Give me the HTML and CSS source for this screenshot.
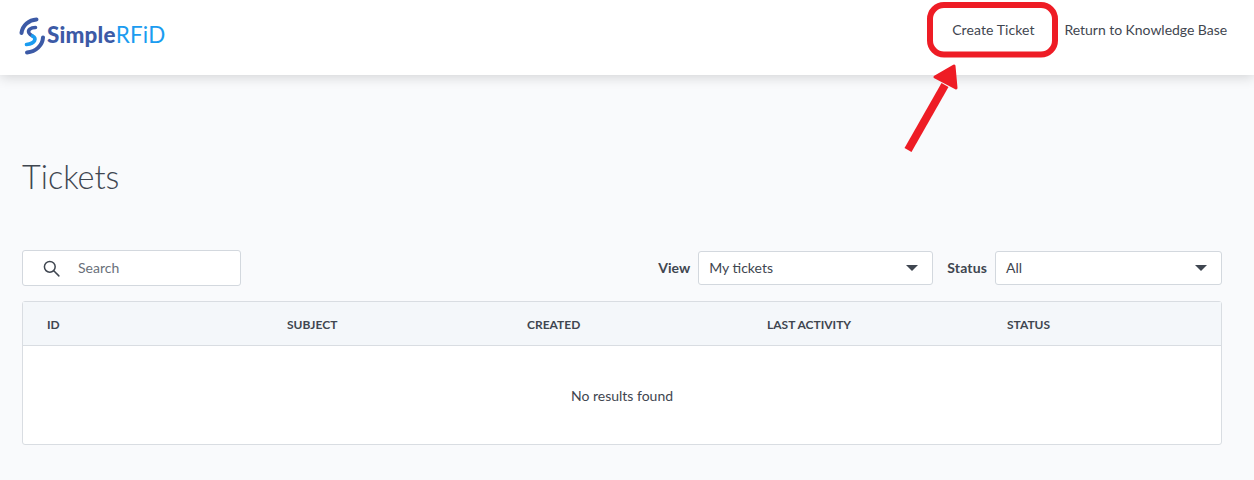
FILE: index.html
```html
<!DOCTYPE html>
<html lang="en">
<head>
<meta charset="utf-8">
<title>Tickets</title>
<link rel="stylesheet" href="styles.css">
</head>
<body>
<header class="topbar">
  <a class="brand">
    <svg class="brand-icon" width="28" height="38" viewBox="0 0 28 38" fill="none" stroke-linecap="round">
      <path d="M17.500 2.500 C10 3 3.500 8 2.500 16" stroke="#3c5aa6" stroke-width="4"/>
      <path d="M16.500 10.500 C11.500 10.500 8.500 13 10 16 C10.800 17.500 12 18.200 13.500 19" stroke="#3c5aa6" stroke-width="3.600"/>
      <path d="M13.500 19 C17.500 21 17 26.500 7.500 27.500" stroke="#1b9cf0" stroke-width="3.600"/>
      <path d="M24 20.500 C23.500 28.500 17 34.500 8 35.500" stroke="#3c5aa6" stroke-width="4"/>
    </svg>
    <span class="brand-name"><span class="brand-simple">Simple</span><span class="brand-rfid">RFiD</span></span>
  </a>
  <nav class="topnav">
    <a class="topnav-link topnav-create">Create Ticket</a>
    <a class="topnav-link topnav-return">Return to Knowledge Base</a>
  </nav>
</header>
<main class="content">
  <h1 class="title">Tickets</h1>
  <div class="toolbar">
    <div class="search">
      <svg class="search-icon" width="17" height="17" viewBox="0 0 18 18" fill="none" stroke="#3f4650" stroke-width="1.600">
        <circle cx="7.200" cy="7.200" r="5.700"/>
        <path d="M11.400 11.400 L16.800 16.800" stroke-linecap="round"/>
      </svg>
      <span class="search-text">Search</span>
    </div>
    <div class="filters">
      <span class="filter-label">View</span>
      <div class="select select-view"><span class="select-value">My tickets</span><i class="caret"></i></div>
      <span class="filter-label filter-label-status">Status</span>
      <div class="select select-status"><span class="select-value">All</span><i class="caret"></i></div>
    </div>
  </div>
  <div class="table">
    <div class="thead">
      <span>ID</span><span>Subject</span><span>Created</span><span>Last activity</span><span>Status</span>
    </div>
    <div class="empty">No results found</div>
  </div>
</main>
<svg class="annotation" width="1254" height="160" viewBox="0 0 1254 160" fill="none">
  <rect x="930" y="5" width="125" height="49.500" rx="14" stroke="#ee1c25" stroke-width="6"/>
  <path d="M908 150 L945 85" stroke="#ee1c25" stroke-width="8"/>
  <path d="M954 66 L956 88 L935 77 Z" fill="#ee1c25" stroke="#ee1c25" stroke-width="3" stroke-linejoin="round"/>
</svg>
</body>
</html>
```
FILE: styles.css
```css
* { box-sizing: border-box; }
html, body { margin: 0; height: 480px; overflow: hidden; }
body {
  background: #f9fafc;
  color: #3f4650;
  font-family: "Lato", "Liberation Sans", sans-serif;
  font-size: 14px;
}
.topbar {
  height: 75px;
  background: #fff;
  box-shadow: 0 2px 12px rgba(0, 0, 0, 0.16);
  display: flex;
  justify-content: space-between;
  padding: 0 27px 0 19px;
}
.brand { display: flex; align-items: center; height: 71px; }
.brand-icon { flex: none; }
.brand-name { font-size: 22.4px; letter-spacing: 0.2px; padding-bottom: 2px; }
.brand-simple { color: #3c5aa6; font-weight: 900; }
.brand-rfid { color: #1b9cf0; font-weight: 400; }
.topnav { display: flex; gap: 30px; align-items: center; height: 60px; }
.topnav-link { color: #3f4650; font-size: 14px; line-height: 20px; }
.topnav-create { letter-spacing: 0.08px; }
.topnav-return { letter-spacing: -0.04px; }
.content { padding: 0 32px 0 22px; }
.title {
  margin: 81px 0 0;
  font-size: 32.4px;
  font-weight: 300;
  line-height: 42px;
  color: #3f4650;
}
.toolbar {
  margin-top: 52px;
  display: flex;
  justify-content: space-between;
  align-items: center;
  height: 36px;
}
.search {
  width: 219px;
  height: 36px;
  display: flex;
  align-items: center;
  background: #fff;
  border: 1px solid #d3d8de;
  border-radius: 3px;
  padding-left: 20px;
}
.search-icon { flex: none; }
.search-text { margin-left: 18px; padding-bottom: 2px; color: #6a707a; font-size: 14px; }
.filters { display: flex; align-items: center; }
.filter-label { font-weight: 700; font-size: 14px; margin-right: 8px; padding-bottom: 2px; }
.filter-label-status { margin-left: 14px; letter-spacing: 0.15px; }
.select {
  height: 34px;
  display: flex;
  align-items: center;
  justify-content: space-between;
  background: #fff;
  border: 1px solid #d3d8de;
  border-radius: 3px;
  padding: 0 14px 0 10px;
}
.select-value { padding-bottom: 2px; }
.select-view { width: 235px; }
.select-status { width: 227px; }
.caret {
  width: 0;
  height: 0;
  border-left: 6px solid transparent;
  border-right: 6px solid transparent;
  border-top: 6px solid #3f4650;
}
.table {
  margin-top: 15px;
  height: 144px;
  background: #fff;
  border: 1px solid #d9dde2;
  border-radius: 3px;
}
.thead {
  height: 44px;
  background: #f4f7fa;
  border-bottom: 1px solid #d9dde2;
  display: grid;
  grid-template-columns: repeat(5, 240px);
  align-items: center;
  padding: 2px 0 0 24px;
  font-size: 12px;
  font-weight: 700;
  text-transform: uppercase;
}
.empty {
  text-align: center;
  line-height: 20px;
  padding-top: 40px;
}
.annotation { position: absolute; left: 0; top: 0; pointer-events: none; }
```
